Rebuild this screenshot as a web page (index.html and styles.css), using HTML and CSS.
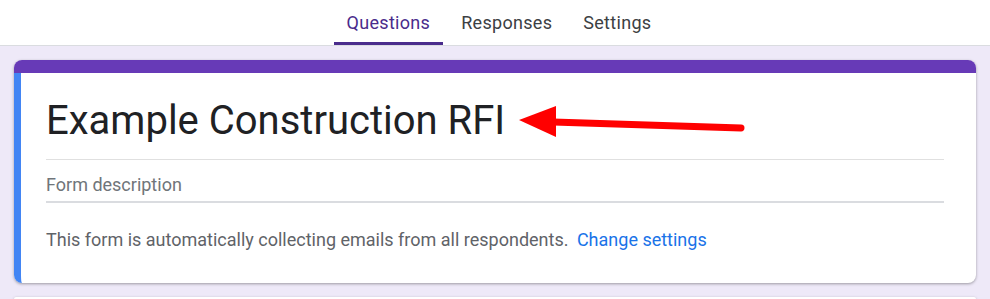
FILE: index.html
```html
<!doctype html>
<html>
	<head>
		<link rel="stylesheet" href="styles.css">
	</head>
	<body>
		<header>
			<ul class="tabs">
				<li class="activo">Questions</li>
				<li>Responses</li>
				<li>Settings</li>
			</ul>
		</header>
		<main>
			<article class="tarjeta">
				<div class="franja"></div>
				<div class="cuerpo">
					<h1>Example Construction RFI</h1>
					<p class="descripcion">Form description</p>
					<p class="aviso">This form is automatically collecting emails from all respondents. <a>Change settings</a></p>
				</div>
				<svg class="flecha" width="240" height="40" viewBox="0 0 240 40">
					<line x1="34" y1="18" x2="222" y2="24" stroke="#ff0000" stroke-width="7" stroke-linecap="round"/>
					<polygon points="0,16 37,2 37,33" fill="#ff0000"/>
				</svg>
			</article>
			<article class="tarjeta siguiente"></article>
		</main>
	</body>
</html>
```

FILE: styles.css
```css
*{padding:0px;margin:0px;}
body,html{
	height:100%;
}
body{
	background:rgb(238,233,248);
	font-family:Roboto, "Liberation Sans", sans-serif;
	overflow:hidden;
}
header{
	background:white;
	height:45px;
	border-bottom:1px solid rgb(218,220,224);
	display:flex;
	justify-content:center;
}
.tabs{
	list-style-type:none;
	display:flex;
	gap:5px;
	margin-left:8px;
}
.tabs li{
	height:45px;
	box-sizing:border-box;
	padding:12px 13px 0px;
	font-size:18px;
	font-weight:400;
	color:rgb(60,64,67);
	letter-spacing:0.3px;
}
.tabs li.activo{
	color:rgb(74,44,140);
	border-bottom:3px solid rgb(74,44,140);
	border-radius:3px 3px 0px 0px;
}
main{
	padding:14px 14px 0px;
}
.tarjeta{
	position:relative;
	background:white;
	border-radius:8px;
	box-shadow:0px 1px 3px rgba(0,0,0,0.35);
}
.franja{
	height:13px;
	background:rgb(103,58,183);
	border-radius:8px 8px 0px 0px;
}
.cuerpo{
	border-left:7px solid rgb(66,133,244);
	border-radius:0px 0px 0px 8px;
	padding:24px 32px 31px 25px;
}
h1{
	font-size:40px;
	font-weight:400;
	color:rgb(32,33,36);
	line-height:48px;
	padding-bottom:14px;
	border-bottom:1px solid rgb(224,224,224);
}
.descripcion{
	font-size:18px;
	color:rgb(112,117,122);
	line-height:24px;
	padding-top:13px;
	padding-bottom:4px;
	border-bottom:2px solid rgb(218,220,224);
}
.aviso{
	font-size:18px;
	color:rgb(95,99,104);
	line-height:24px;
	margin-top:25px;
}
.aviso a{
	color:rgb(26,115,232);
	margin-left:4px;
}
.flecha{
	position:absolute;
	left:505px;
	top:44px;
}
.siguiente{
	margin-top:14px;
	height:2px;
	border-radius:8px 8px 0px 0px;
}
```
